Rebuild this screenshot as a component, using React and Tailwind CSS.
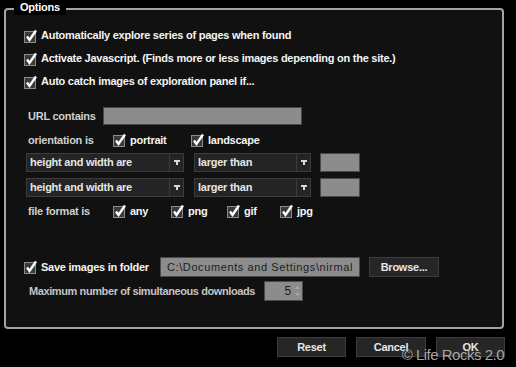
import React from "react";

const font = { fontFamily: '"Liberation Sans", Arial, sans-serif' };

function Check({ label, className = "" }) {
  return (
    <div className={"flex items-center " + className}>
      <svg width="16" height="14" viewBox="0 0 16 14" className="shrink-0">
        <rect x="1.5" y="2.5" width="11" height="11" fill="#3a3a3a" stroke="#8c8c8c" />
        <path d="M4 7.5 L6.5 11 L13 1.5" fill="none" stroke="#ffffff" strokeWidth="2.4" />
      </svg>
      {label && <span className="ml-[2px] whitespace-nowrap text-[11px] font-bold text-[#f4f4f4]">{label}</span>}
    </div>
  );
}

function Select({ text, w }) {
  return (
    <div className={"flex h-[19px] border border-[#3c3c3c] bg-[#242424] " + w}>
      <div className="flex-1 pl-[3px] text-[11px] font-bold leading-[17px] text-[#e6e6e6]">{text}</div>
      <div className="flex w-[14px] items-center justify-center border-l border-[#3c3c3c]">
        <svg width="6" height="6" viewBox="0 0 6 6">
          <path d="M0 0 H6 V2 H4 V5 H2 V2 H0 Z" fill="#d8d8d8" />
        </svg>
      </div>
    </div>
  );
}

export default function App() {
  return (
    <div className="relative h-[367px] w-[516px] overflow-hidden bg-black tracking-[-0.25px]" style={font}>
      <div className="pl-[4px] pt-[8px]">
        <div className="relative h-[321px] w-[500px] rounded-[4px] border-2 border-[#a3a3a3] bg-[#111111] pl-[17px] pt-[14px]">
          <span className="absolute left-[8px] top-[-10px] bg-black px-[6px] text-[11px] font-bold leading-[15px] text-white">
            Options
          </span>

          <Check className="h-[23px]" label="Automatically explore series of pages when found" />
          <Check className="h-[23px]" label="Activate Javascript. (Finds more or less images depending on the site.)" />
          <Check className="h-[23px]" label="Auto catch images of exploration panel if..." />

          <div className="mt-[14px] flex h-[18px] items-center pl-[5px]">
            <span className="w-[75px] text-[11px] font-bold text-[#cfcfcf]">URL contains</span>
            <div className="h-[18px] w-[199px] border border-[#4a4a4a] bg-[#8c8c8c]" />
          </div>

          <div className="mt-[6px] flex h-[18px] items-center pl-[5px]">
            <span className="w-[84px] text-[11px] font-bold text-[#cfcfcf]">orientation is</span>
            <Check className="w-[78px]" label="portrait" />
            <Check label="landscape" />
          </div>

          <div className="mt-[4px] flex items-center pl-[3px]">
            <Select text="height and width are" w="w-[158px]" />
            <div className="w-[10px]" />
            <Select text="larger than" w="w-[117px]" />
            <div className="ml-[9px] h-[19px] w-[40px] border border-[#4a4a4a] bg-[#8c8c8c]" />
          </div>
          <div className="mt-[6px] flex items-center pl-[3px]">
            <Select text="height and width are" w="w-[158px]" />
            <div className="w-[10px]" />
            <Select text="larger than" w="w-[117px]" />
            <div className="ml-[9px] h-[19px] w-[40px] border border-[#4a4a4a] bg-[#8c8c8c]" />
          </div>

          <div className="mt-[5px] flex h-[18px] items-center pl-[5px]">
            <span className="w-[84px] text-[11px] font-bold text-[#cfcfcf]">file format is</span>
            <Check className="w-[58px]" label="any" />
            <Check className="w-[56px]" label="png" />
            <Check className="w-[53px]" label="gif" />
            <Check label="jpg" />
          </div>

          <div className="mt-[37px] flex h-[20px] items-center">
            <Check className="w-[137px]" label="Save images in folder" />
            <div className="h-[20px] w-[200px] overflow-hidden whitespace-nowrap border border-[#4a4a4a] bg-[#8c8c8c] pl-[6px] text-[11px] leading-[18px] tracking-[0.6px] text-[#1c1c1c]">
              C:\Documents and Settings\nirmal
            </div>
            <button className="ml-[9px] h-[20px] w-[70px] border border-[#3c3c3c] bg-[#262626] text-[11px] font-bold text-[#e6e6e6]">
              Browse...
            </button>
          </div>

          <div className="mt-[4px] flex h-[20px] items-center pl-[6px]">
            <span className="w-[235px] whitespace-nowrap text-[11px] font-bold tracking-[-0.4px] text-[#c4c4c4]">Maximum number of simultaneous downloads</span>
            <div className="flex h-[20px] w-[39px] items-center justify-end border border-[#4a4a4a] bg-[#8c8c8c] text-[12px] text-[#1c1c1c]">
              <span>5</span>
              <svg width="9" height="16" viewBox="0 0 9 16" className="ml-[2px]">
                <path d="M4.5 3 L7 6 H2 Z" fill="#a8a8a8" />
                <path d="M2 10 H7 L4.5 13 Z" fill="#a8a8a8" />
              </svg>
            </div>
          </div>
        </div>
      </div>

      <div className="mt-[8px] flex gap-[10px] pl-[277px]">
        <button className="h-[20px] w-[69px] border border-[#3c3c3c] bg-[#262626] text-[11px] font-bold text-[#e6e6e6]">Reset</button>
        <button className="h-[20px] w-[70px] border border-[#3c3c3c] bg-[#262626] text-[11px] font-bold text-[#e6e6e6]">Cancel</button>
        <button className="h-[20px] w-[69px] border border-[#3c3c3c] bg-[#262626] text-[11px] font-bold text-[#e6e6e6]">OK</button>
      </div>

      <span className="absolute right-[12px] top-[345px] text-[15px] leading-[20px] tracking-[-0.5px] text-[#a6a6a6]">
        © Life Rocks 2.0
      </span>
    </div>
  );
}
